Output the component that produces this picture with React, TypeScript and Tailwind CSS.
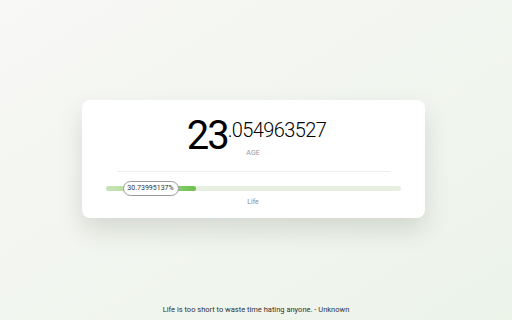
export default function App() {
  const life = 30.73995137

  return (
    <div className="flex h-screen w-full flex-col items-center bg-gradient-to-br from-[#f8f8f6] to-[#ecf3e9] font-['Roboto',sans-serif]">
      <div className="mt-[100px] mr-[6px] w-[343px] rounded-[8px] bg-white px-[24px] pt-[16px] pb-[12px] shadow-[0_12px_24px_rgba(60,70,55,0.16)]">
        <div className="ml-[7px] flex items-start justify-center leading-none text-black">
          <span className="text-[40px] tracking-[-2px]">23</span>
          <span className="mt-[4px] text-[20px] font-light tracking-[-0.6px]">.054963527</span>
        </div>
        <div className="mt-[-6px] text-center text-[7px] leading-none text-[#999]">AGE</div>

        <div className="mx-[11px] mt-[14px] border-t border-[#eeeeee]" />

        <div className="relative mt-[14px] h-[5px] rounded-full bg-[#e6efe0]">
          <div className="h-full rounded-full bg-gradient-to-r from-[#c6e4b6] via-[#a9d893] to-[#6cc04d]" style={{ width: '30.7%' }} />
          <div className="absolute top-[-5px] left-[17px] flex h-[15px] w-[56px] items-center justify-center rounded-full border border-[#9a9a9a] bg-white text-[7px] leading-none text-[#333]">
            {life}%
          </div>
        </div>
        <div className="mt-[8px] text-center text-[7px] leading-none text-[#888]">Life</div>
      </div>

      <div className="mt-auto mb-[7px] text-[7.5px] leading-none text-[#333]">
        Life is too short to waste time hating anyone. - Unknown
      </div>
    </div>
  )
}
